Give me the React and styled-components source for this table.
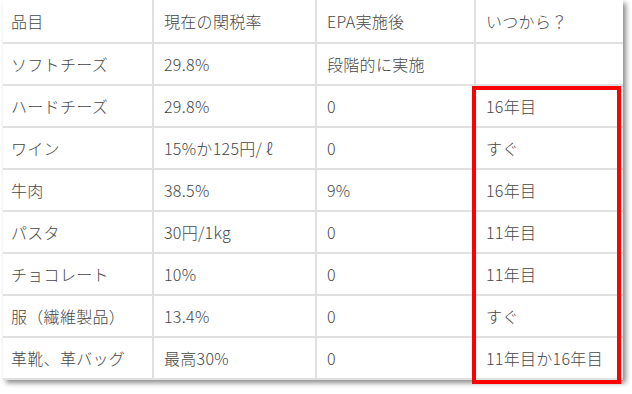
import React from "react";
import styled, { createGlobalStyle } from "styled-components";

const GlobalStyle = createGlobalStyle`
  html, body {
    margin: 0;
    padding: 0;
    background: #fff;
  }
  body {
    font-family: "Noto Sans CJK JP", "Noto Sans", sans-serif;
  }
`;

const Page = styled.div`
  width: 632px;
  height: 394px;
  padding-left: 3px;
  box-sizing: border-box;
`;

const Sheet = styled.div`
  position: relative;
  width: 620px;
  background: #fff;
  box-shadow: 3px 3px 5px rgba(0, 0, 0, 0.45);
`;

const Grid = styled.div`
  display: grid;
  grid-template-columns: 149px 163px 159px 149px;
  grid-template-rows: 44px repeat(8, 42px);
`;

const Cell = styled.div`
  display: flex;
  align-items: center;
  padding-left: ${(p) => (p.$first ? "8px" : "10px")};
  border-bottom: 2px solid #e0e0e0;
  border-left: ${(p) => (p.$first ? "none" : "2px solid #e0e0e0")};
  font-size: 16px;
  font-weight: 300;
  letter-spacing: 0.3px;
  color: #464646;
  white-space: nowrap;
  box-sizing: border-box;
`;

const Highlight = styled.div`
  position: absolute;
  left: 469px;
  top: 86px;
  width: 149px;
  height: 298px;
  border: 4px solid #ff0000;
  box-sizing: border-box;
  pointer-events: none;
`;

const header = ["品目", "現在の関税率", "EPA実施後", "いつから？"];

const rows = [
  ["ソフトチーズ", "29.8%", "段階的に実施", ""],
  ["ハードチーズ", "29.8%", "0", "16年目"],
  ["ワイン", "15%か125円/ ℓ", "0", "すぐ"],
  ["牛肉", "38.5%", "9%", "16年目"],
  ["パスタ", "30円/1kg", "0", "11年目"],
  ["チョコレート", "10%", "0", "11年目"],
  ["服（繊維製品）", "13.4%", "0", "すぐ"],
  ["革靴、革バッグ", "最高30%", "0", "11年目か16年目"],
];

export default function App() {
  return (
    <Page>
      <GlobalStyle />
      <Sheet>
        <Grid>
          {[header, ...rows].map((row, r) =>
            row.map((text, c) => (
              <Cell key={`${r}-${c}`} $first={c === 0}>
                {text}
              </Cell>
            ))
          )}
        </Grid>
        <Highlight />
      </Sheet>
    </Page>
  );
}
